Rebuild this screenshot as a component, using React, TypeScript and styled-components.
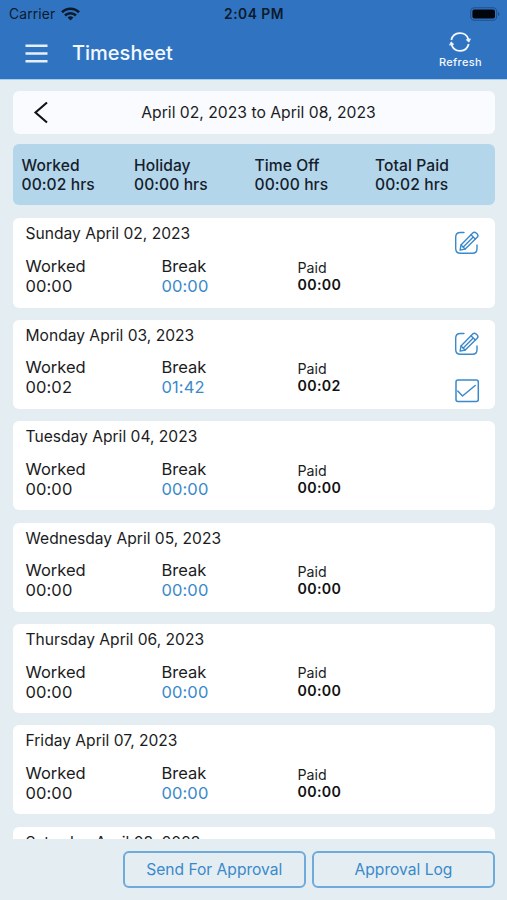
import React from "react";
import styled, { createGlobalStyle, css } from "styled-components";

const GlobalStyle = createGlobalStyle`
  *, *::before, *::after { box-sizing: border-box; }
  body {
    margin: 0;
    background: #e4edf1;
    font-family: Inter, "Liberation Sans", sans-serif;
    color: #1b1c1e;
    -webkit-font-smoothing: antialiased;
  }
  button { font: inherit; color: inherit; background: none; border: 0; padding: 0; }
`;

const BLUE = "#3a89cb";

const Screen = styled.div`
  width: 507px;
  height: 900px;
  display: flex;
  flex-direction: column;
  overflow: hidden;
  background: #e4edf1;
`;

const Header = styled.header`
  flex: none;
  height: 80px;
  background: #3074c1;
  border-bottom: 1px solid #a9cdec;
`;

const StatusBar = styled.div`
  height: 27px;
  display: grid;
  grid-template-columns: 1fr auto 1fr;
  align-items: center;
  padding: 1px 7px 0 9px;
  font-size: 13.8px;
  line-height: 18px;
  color: #0c1a2c;
`;

const Carrier = styled.div`
  display: flex;
  align-items: center;
  gap: 6px;
  letter-spacing: 0.16px;
`;

const Clock = styled.div`
  font-weight: 600;
  font-size: 13.8px;
  letter-spacing: 0.5px;
  margin-right: 1px;
`;

const Battery = styled.div`
  justify-self: end;
  display: flex;
  margin-top: -1px;
`;

const NavBar = styled.div`
  height: 52px;
  display: flex;
  align-items: center;
  padding: 0 25px 0 25px;
  color: #f3f8ff;
`;

const MenuButton = styled.button`
  display: flex;
  margin-right: 24px;
`;

const Title = styled.h1`
  margin: 0;
  flex: 1;
  font-size: 20px;
  line-height: 24px;
  font-weight: 500;
`;

const RefreshButton = styled.button`
  display: flex;
  flex-direction: column;
  align-items: center;
  gap: 3px;
  margin-top: -5px;
  font-size: 11px;
  line-height: 14px;
  font-weight: 500;
  letter-spacing: 0.35px;
`;

const Content = styled.main`
  flex: 1;
  min-height: 0;
  display: flex;
  flex-direction: column;
  padding: 11px 12px 12px 13px;
`;

const PeriodBar = styled.div`
  flex: none;
  height: 43px;
  display: grid;
  grid-template-columns: 56px 1fr 56px;
  align-items: center;
  border-radius: 6px;
  background: #f9fbfe;
`;

const PreviousButton = styled.button`
  display: flex;
  justify-content: center;
`;

const PeriodText = styled.div`
  padding: 1px 0 0 9px;
  text-align: center;
  font-size: 15.7px;
  line-height: 20px;
`;

const Summary = styled.div`
  flex: none;
  height: 61px;
  margin-top: 10px;
  display: grid;
  grid-template-columns: 112.5px 120.5px 120.5px 1fr;
  padding: 13px 0 0 8.5px;
  border-radius: 6px;
  background: #b3d6ea;
  color: #15202b;
  font-size: 15.6px;
  line-height: 18.5px;
  font-weight: 500;
  letter-spacing: 0.08px;
`;

const DayList = styled.div`
  flex: 1;
  min-height: 0;
  margin-top: 13.4px;
  overflow: hidden;
  display: flex;
  flex-direction: column;
  gap: 12.2px;
`;

const DayCard = styled.section`
  flex: none;
  height: 89.2px;
  display: grid;
  grid-template-columns: 1fr 30px;
  padding: 6px 13px 0 12.5px;
  border-radius: 6px;
  background: #fff;
`;

const DayName = styled.h2`
  margin: 0;
  font-size: 15.6px;
  line-height: 20px;
  font-weight: 400;
`;

const Figures = styled.div`
  display: grid;
  grid-template-columns: 136px 136px 1fr;
  margin-top: 11.7px;
`;

const Figure = styled.div<{ $kind?: "break" | "paid" }>`
  font-size: 16.5px;
  line-height: 20px;
  ${(p) =>
    p.$kind === "paid" &&
    css`
      padding-top: 2.8px;
      font-size: 14.2px;
      line-height: 17.2px;
    `}
`;

const Value = styled.div<{ $kind?: "break" | "paid" }>`
  letter-spacing: 0.1px;
  ${(p) => p.$kind === "break" && css`color: ${BLUE};`}
  ${(p) => p.$kind === "paid" && css`font-weight: 600; color: #111; letter-spacing: 0.35px;`}
`;

const Actions = styled.div`
  display: flex;
  flex-direction: column;
  align-items: center;
  gap: 20.5px;
  padding-top: 5.5px;
`;

const IconButton = styled.button`
  display: flex;
`;

const Footer = styled.footer`
  flex: none;
  display: grid;
  grid-template-columns: 183.5px 183px;
  justify-content: end;
  gap: 6px;
  margin-top: 12px;
`;

const OutlineButton = styled.button`
  height: 37px;
  border: 2px solid #6eabdb;
  border-radius: 6px;
  color: ${BLUE};
  font-size: 15.6px;
  line-height: 20px;
  padding-top: 1px;
`;

const WifiIcon = () => (
  <svg width="19" height="14" viewBox="0 0 19 14" fill="none" stroke="#0c1a2c" strokeWidth="2.6">
    <path d="M1 5.2a12.1 12.1 0 0 1 17 0" />
    <path d="M4 8.5a7.8 7.8 0 0 1 11 0" />
    <path d="M9.5 13.5 6.6 10.6a4.1 4.1 0 0 1 5.8 0Z" fill="#0c1a2c" stroke="none" />
  </svg>
);

const BatteryIcon = () => (
  <svg width="30" height="14" viewBox="0 0 30 14">
    <rect x="0.7" y="0.7" width="26" height="12.6" rx="3.8" fill="none" stroke="#20508a" strokeWidth="1.1" />
    <rect x="2.4" y="2.4" width="22.6" height="9.2" rx="2" fill="#02060c" />
    <path d="M28 5v4c1-.3 1.5-1 1.5-2S29 5.3 28 5Z" fill="#20508a" />
  </svg>
);

const MenuIcon = () => (
  <svg width="23" height="19" viewBox="0 0 23 19" stroke="#e6f0fc" strokeWidth="2.4">
    <path d="M.5 1.7h22M.5 9.5h22M.5 17.3h22" />
  </svg>
);

const RefreshIcon = () => (
  <svg width="24" height="20" viewBox="0 0 24 20" fill="none" stroke="#f3f8ff" strokeWidth="1.8">
    <path d="M3.3 8A8.9 8.9 0 0 1 20.4 7.3" />
    <path d="M20.7 12A8.9 8.9 0 0 1 3.6 12.7" />
    <path d="M18.3 7.8l4.1-.9-1.5 3.2ZM5.7 12.2l-4.1.9 1.5-3.2Z" fill="#f3f8ff" strokeWidth=".8" />
  </svg>
);

const ChevronIcon = () => (
  <svg width="16" height="24" viewBox="0 0 16 24" fill="none" stroke="#111" strokeWidth="2.1">
    <path d="M14 1.5 2.5 11.5 14 21.5" />
  </svg>
);

const EditIcon = () => (
  <svg width="26" height="26" viewBox="0 0 26 26" fill="none" stroke={BLUE} strokeWidth="1.4" strokeLinecap="round" strokeLinejoin="round">
    <path d="M10 2.5H6.5Q1.7 2.5 1.7 7v11.5q0 4.8 4.8 4.8h12q4.500 0 4.500-4.500V15" />
    <path d="m6.100 20.100.9-5L18.700 3.100q1.600-1.500 3.500-.1l1 .9q1.600 1.800 0 3.400L11.200 19Z" />
    <path d="m7 15.100 4.200 3.900M17 4.800l4.300 4.300M19 7.200 9 17.200" />
  </svg>
);

const CheckIcon = () => (
  <svg width="26" height="26" viewBox="0 0 26 26" fill="none" stroke={BLUE} strokeWidth="1.5" strokeLinecap="round" strokeLinejoin="round">
    <rect x="2" y="2" width="22.3" height="21.5" rx="2" />
    <path d="m3.800 13 4.700 5L21.200 7.500" />
  </svg>
);

type Day = { name: string; worked: string; rest: string; paid: string; edit?: boolean; approve?: boolean };

const totals = [
  { label: "Worked", value: "00:02 hrs" },
  { label: "Holiday", value: "00:00 hrs" },
  { label: "Time Off", value: "00:00 hrs" },
  { label: "Total Paid", value: "00:02 hrs" },
];

const days: Day[] = [
  { name: "Sunday April 02, 2023", worked: "00:00", rest: "00:00", paid: "00:00", edit: true },
  { name: "Monday April 03, 2023", worked: "00:02", rest: "01:42", paid: "00:02", edit: true, approve: true },
  { name: "Tuesday April 04, 2023", worked: "00:00", rest: "00:00", paid: "00:00" },
  { name: "Wednesday April 05, 2023", worked: "00:00", rest: "00:00", paid: "00:00" },
  { name: "Thursday April 06, 2023", worked: "00:00", rest: "00:00", paid: "00:00" },
  { name: "Friday April 07, 2023", worked: "00:00", rest: "00:00", paid: "00:00" },
  { name: "Saturday April 08, 2023", worked: "00:00", rest: "00:00", paid: "00:00" },
];

const DayEntry = ({ day }: { day: Day }) => (
  <DayCard>
    <div>
      <DayName>{day.name}</DayName>
      <Figures>
        <Figure>
          <div>Worked</div>
          <Value>{day.worked}</Value>
        </Figure>
        <Figure>
          <div>Break</div>
          <Value $kind="break">{day.rest}</Value>
        </Figure>
        <Figure $kind="paid">
          <div>Paid</div>
          <Value $kind="paid">{day.paid}</Value>
        </Figure>
      </Figures>
    </div>
    <Actions>
      {day.edit && <IconButton aria-label="Edit day"><EditIcon /></IconButton>}
      {day.approve && <IconButton aria-label="Approve day"><CheckIcon /></IconButton>}
    </Actions>
  </DayCard>
);

export default function App() {
  return (
    <Screen>
      <GlobalStyle />
      <Header>
        <StatusBar>
          <Carrier>Carrier <WifiIcon /></Carrier>
          <Clock>2:04 PM</Clock>
          <Battery><BatteryIcon /></Battery>
        </StatusBar>
        <NavBar>
          <MenuButton aria-label="Menu"><MenuIcon /></MenuButton>
          <Title>Timesheet</Title>
          <RefreshButton><RefreshIcon />Refresh</RefreshButton>
        </NavBar>
      </Header>
      <Content>
        <PeriodBar>
          <PreviousButton aria-label="Previous period"><ChevronIcon /></PreviousButton>
          <PeriodText>April 02, 2023 to April 08, 2023</PeriodText>
        </PeriodBar>
        <Summary>
          {totals.map((t) => (
            <div key={t.label}>
              <div>{t.label}</div>
              <div>{t.value}</div>
            </div>
          ))}
        </Summary>
        <DayList>
          {days.map((day) => <DayEntry key={day.name} day={day} />)}
        </DayList>
        <Footer>
          <OutlineButton>Send For Approval</OutlineButton>
          <OutlineButton>Approval Log</OutlineButton>
        </Footer>
      </Content>
    </Screen>
  );
}
